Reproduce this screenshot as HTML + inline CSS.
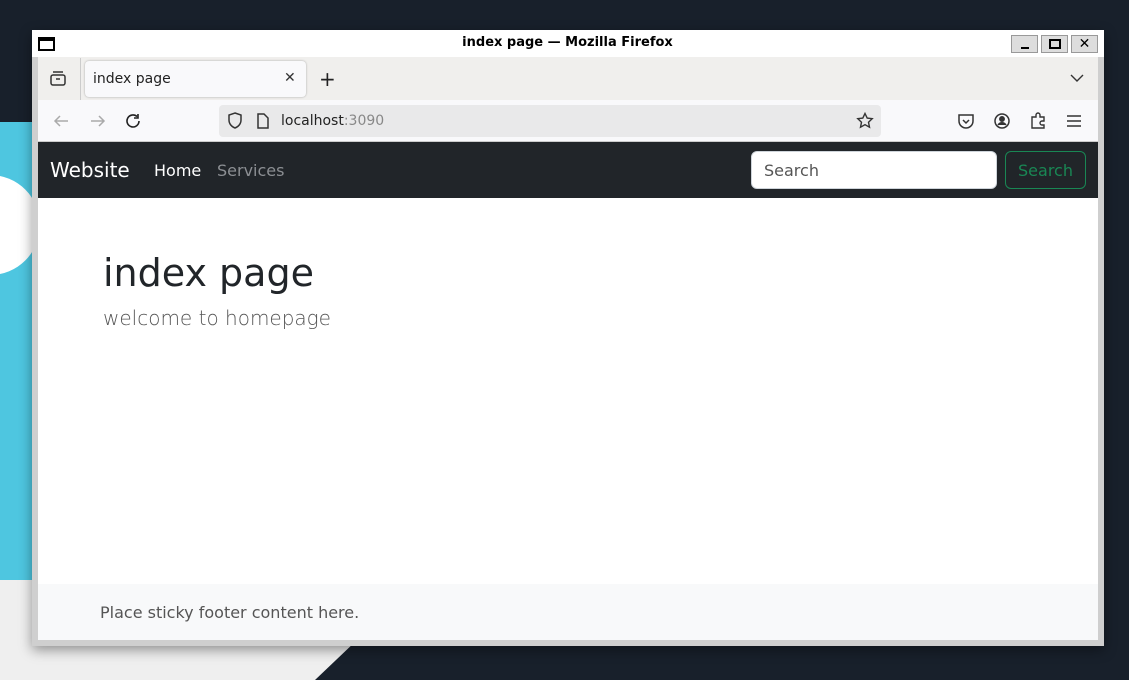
<!DOCTYPE html>
<html><head><style>
*{margin:0;padding:0;box-sizing:border-box}
body{width:1129px;height:678px;overflow:hidden;background:#18202b;font-family:"DejaVu Sans","Liberation Sans",sans-serif;position:relative}
.abs{position:absolute}
</style></head><body>
<div class="abs" style="left:-60px;top:122px;width:140px;height:460px;background:#4ec6e0;border-radius:30px 0 0 30px"></div>
<div class="abs" style="left:-60px;top:175px;width:100px;height:100px;border-radius:50%;background:#fff"></div>
<div class="abs" style="left:0;top:580px;width:420px;height:100px;background:#efefef;clip-path:polygon(0 0,100% 0,75% 100%,0 100%)"></div>
<div class="abs" style="left:32px;top:30px;width:1072px;height:616px;background:#cfcfcf;box-shadow:0 4px 12px rgba(0,0,0,.4)"></div>
<div class="abs" style="left:32px;top:30px;width:1072px;height:27px;background:#fff"></div>
<div class="abs" style="left:38px;top:37px;width:17px;height:14px;border:2px solid #000;border-top-width:4px"></div>
<div class="abs" style="left:0;width:1135px;top:35px;text-align:center;font-size:13px;font-weight:bold;color:#000">index page — Mozilla Firefox</div>
<div class="abs" style="left:1011px;top:35px;width:27px;height:18px;background:#ddd;border:1px solid #999"><div class="abs" style="left:9px;top:11px;width:8px;height:2px;background:#000"></div></div>
<div class="abs" style="left:1041px;top:35px;width:27px;height:18px;background:#ddd;border:1px solid #999"><div class="abs" style="left:7px;top:3px;width:12px;height:10px;border:2px solid #000"></div></div>
<div class="abs" style="left:1071px;top:35px;width:27px;height:18px;background:#ddd;border:1px solid #999;font-size:14px;font-weight:bold;text-align:center;line-height:16px">✕</div>
<div class="abs" style="left:38px;top:57px;width:1060px;height:43px;background:#f0efed"></div>
<svg class="abs" style="left:49px;top:70px" width="18" height="18" viewBox="0 0 18 18" fill="none" stroke="#333" stroke-width="1.5"><rect x="2" y="5" width="14" height="10" rx="2"/><path d="M4 2h10M7 9h4"/></svg>
<div class="abs" style="left:80px;top:58px;width:1px;height:42px;background:#ccc"></div>
<div class="abs" style="left:85px;top:61px;width:221px;height:36px;background:#f9f9fb;border-radius:4px;box-shadow:0 0 2px rgba(0,0,0,.3)"></div>
<div class="abs" style="left:93px;top:71px;font-size:14px;color:#222">index page</div>
<div class="abs" style="left:284px;top:70px;font-size:14px;color:#333">✕</div>
<div class="abs" style="left:319px;top:67px;font-size:20px;color:#222">+</div>
<svg class="abs" style="left:1070px;top:73px" width="14" height="10"><path d="M1 2l6 6 6-6" fill="none" stroke="#333" stroke-width="1.4"/></svg>
<div class="abs" style="left:38px;top:100px;width:1060px;height:41px;background:#f9f9fb"></div>
<div class="abs" style="left:38px;top:141px;width:1060px;height:1px;background:#ccc"></div>
<svg class="abs" style="left:52px;top:112px" width="20" height="18" fill="none" stroke="#aaa" stroke-width="1.5"><path d="M16 9H3M8 4L3 9l5 5"/></svg>
<svg class="abs" style="left:88px;top:112px" width="20" height="18" fill="none" stroke="#aaa" stroke-width="1.5"><path d="M3 9h13M11 4l5 5-5 5"/></svg>
<svg class="abs" style="left:124px;top:112px" width="20" height="18" fill="none" stroke="#222" stroke-width="1.6"><path d="M15 9a6 6 0 1 1-2-4.5M14 2v4h-4"/></svg>
<div class="abs" style="left:219px;top:105px;width:662px;height:32px;background:#e9e9ea;border-radius:4px"></div>
<svg class="abs" style="left:226px;top:111px" width="18" height="20" fill="none" stroke="#333" stroke-width="1.5"><path d="M9 2l6 2v5c0 4-3 7-6 8-3-1-6-4-6-8V4z"/></svg>
<svg class="abs" style="left:256px;top:112px" width="14" height="18" fill="none" stroke="#333" stroke-width="1.5"><path d="M2 2h6l4 4v10H2z"/></svg>
<div class="abs" style="left:281px;top:113px;font-size:14px;color:#222">localhost<span style="color:#888">:3090</span></div>
<svg class="abs" style="left:856px;top:112px" width="18" height="18" fill="none" stroke="#333" stroke-width="1.4"><path d="M9 1.5l2.2 4.6 5 .6-3.7 3.5 1 5-4.5-2.5-4.5 2.5 1-5L1.8 6.7l5-.6z"/></svg>
<svg class="abs" style="left:957px;top:112px" width="18" height="18" fill="none" stroke="#333" stroke-width="1.5"><path d="M2 3h14v6a7 7 0 0 1-14 0z M6 8l3 3 3-3"/></svg>
<svg class="abs" style="left:993px;top:112px" width="18" height="18" fill="none" stroke="#333" stroke-width="1.5"><circle cx="9" cy="9" r="7"/><circle cx="9" cy="7" r="2.2" fill="#333"/><path d="M5 13c2-3 6-3 8 0" fill="#333"/></svg>
<svg class="abs" style="left:1030px;top:111px" width="18" height="20" fill="none" stroke="#333" stroke-width="1.4"><path d="M2 6h4V4a2 2 0 0 1 4 0v2h4v4h-2a2 2 0 0 0 0 4h2v3H2z"/></svg>
<svg class="abs" style="left:1066px;top:114px" width="16" height="14" stroke="#333" stroke-width="1.5"><path d="M1 2h14M1 7h14M1 12h14"/></svg>
<div class="abs" style="left:38px;top:142px;width:1060px;height:56px;background:#212529"></div>
<div class="abs" style="left:50px;top:158px;font-size:20px;color:#fff">Website</div>
<div class="abs" style="left:154px;top:161px;font-size:16px;color:#fff">Home</div>
<div class="abs" style="left:217px;top:161px;font-size:16px;color:#8c8f93">Services</div>
<div class="abs" style="left:751px;top:151px;width:246px;height:38px;background:#fff;border-radius:6px;border:1px solid #ced4da;padding:9px 12px;font-size:16px;color:#555">Search</div>
<div class="abs" style="left:1005px;top:151px;width:81px;height:38px;border:1px solid #198754;border-radius:6px;font-size:16px;color:#198754;text-align:center;line-height:37px">Search</div>
<div class="abs" style="left:38px;top:198px;width:1060px;height:386px;background:#fff"></div>
<div class="abs" style="left:103px;top:251px;font-size:38px;color:#212529">index page</div>
<div class="abs" style="left:103px;top:306px;font-size:20px;color:#555;font-weight:300">welcome to homepage</div>
<div class="abs" style="left:38px;top:584px;width:1060px;height:56px;background:#f8f9fa"></div>
<div class="abs" style="left:100px;top:603px;font-size:16px;color:#555">Place sticky footer content here.</div>
</body></html>
